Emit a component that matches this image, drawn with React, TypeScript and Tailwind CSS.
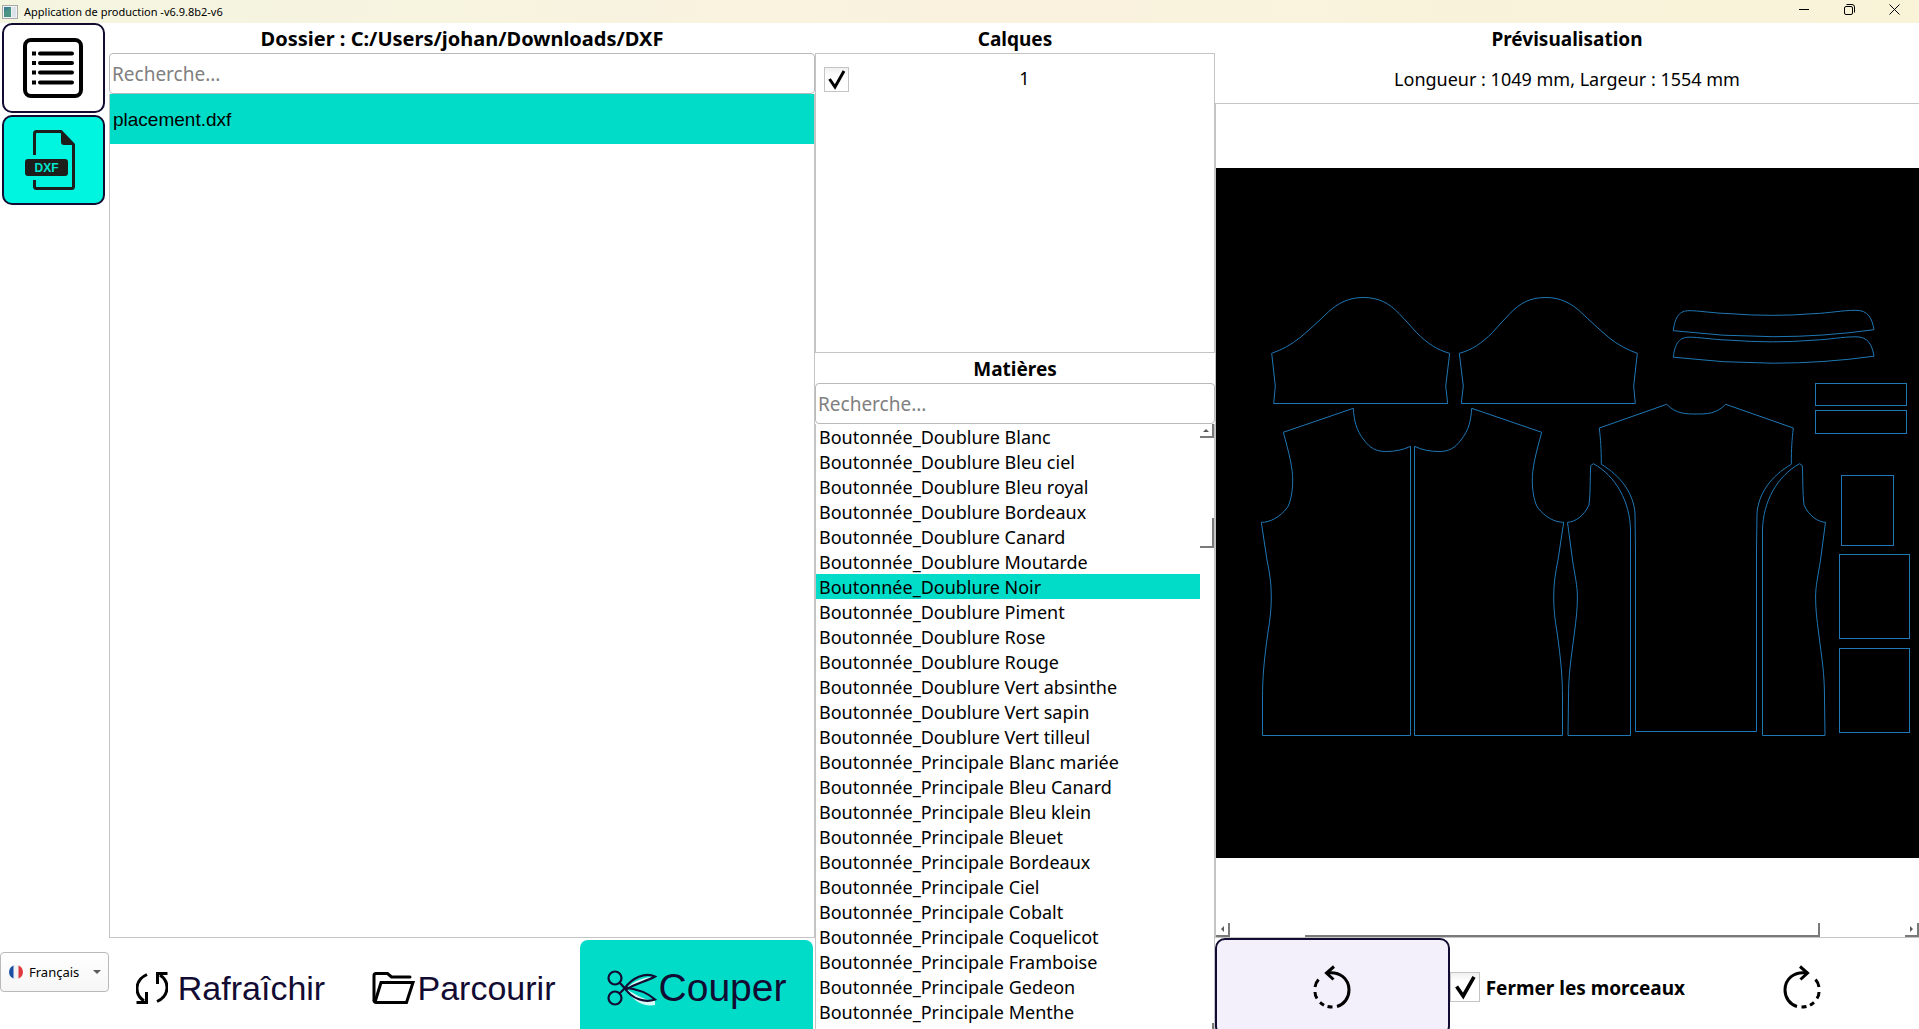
import { useState, ReactNode } from "react";

type IconButtonProps = {
  title: string;
  active?: boolean;
  onClick?: () => void;
  children: ReactNode;
};

type CheckBoxProps = {
  id: string;
  checked: boolean;
  className: string;
  onChange: (checked: boolean) => void;
};

type SearchProps = {
  label: string;
  value: string;
  onChange: (value: string) => void;
};

const MATERIALS = [
  "Boutonnée_Doublure Blanc",
  "Boutonnée_Doublure Bleu ciel",
  "Boutonnée_Doublure Bleu royal",
  "Boutonnée_Doublure Bordeaux",
  "Boutonnée_Doublure Canard",
  "Boutonnée_Doublure Moutarde",
  "Boutonnée_Doublure Noir",
  "Boutonnée_Doublure Piment",
  "Boutonnée_Doublure Rose",
  "Boutonnée_Doublure Rouge",
  "Boutonnée_Doublure Vert absinthe",
  "Boutonnée_Doublure Vert sapin",
  "Boutonnée_Doublure Vert tilleul",
  "Boutonnée_Principale Blanc mariée",
  "Boutonnée_Principale Bleu Canard",
  "Boutonnée_Principale Bleu klein",
  "Boutonnée_Principale Bleuet",
  "Boutonnée_Principale Bordeaux",
  "Boutonnée_Principale Ciel",
  "Boutonnée_Principale Cobalt",
  "Boutonnée_Principale Coquelicot",
  "Boutonnée_Principale Framboise",
  "Boutonnée_Principale Gedeon",
  "Boutonnée_Principale Menthe",
];

const FILES = ["placement.dxf"];

const SLEEVE =
  "M55.7 185.3Q71 180 84 169.7C93 162 103 153 112.3 144C122 135 133 129.5 147 129.5C163 129.5 173 135 183 145.5C189 152 195 158 200.7 164.7C211 175 221 182 233.7 185.3L229.7 218L231.7 235.5H57.7L59.3 218Z";
const FRONT =
  "M137.3 240.3L67.3 264.3C73 285 77 300 76.7 314C76.5 325 74 336 71 340C64 349 54 354.5 45.3 354.3L51 392C53.5 404 55.3 415 55.3 429C55.3 442 54 452 52 464C48 492 46.5 510 46.5 530V567.5H194.5V278.3C187 282 179 283.5 169.7 283.5C160 283.5 154 280 148 272C140 262 138 252 137.3 240.3Z";
const BACK =
  "M450.7 236.3C460 246 470 246 480.3 246C491 246 500 246 509.7 236.3L577.3 260C576 272 575.3 280 575.3 296.3C555 308 542 326 541 346L540.5 382V563.5H419.5V382L419 346C418 326 405 308 385.3 296.3C385.3 280 384.6 272 383.3 260Z";
const SIDE =
  "M377.3 295.7L374.7 297.7C374 310 374.5 325 373 337C368 348 359 354 351.5 354.3L356.5 392C359 408 361.4 418 361.4 429C361.4 442 360 452 358.5 464C355 492 352.5 505 352.5 530L352 567.5H414.5V362C414 334 400 308 377.3 295.7Z";
const COLLAR =
  "M457.3 162.7C459 148 464 142.7 473 142.7C482 142.5 495 145 514 145.7Q557 149 597 145.7C615 145 625 142.3 640 142.3C652 142.3 656 150 658 161.7Q608 168.7 557.3 168.7Q507 168.7 457.3 162.7Z";

const AppSVG = () => (
  <svg width="16" height="14" viewBox="0 0 16 14">
    <rect x="0.5" y="0.5" width="15" height="13" fill="#f2f2f2" stroke="#a9a9a9" />
    <rect x="2" y="2" width="7" height="10" fill="#3f7f93" />
    <path d="M2 7L9 2V12H2Z" fill="#4f9d7d" opacity="0.7" />
    <rect x="10" y="2" width="4" height="10" fill="#dbe3ea" />
  </svg>
);

const ListSVG = () => (
  <svg width="60" height="60" viewBox="0 0 60 60" fill="none" stroke="#000" strokeWidth="4">
    <rect x="2" y="2" width="56" height="56" rx="6" />
    <path strokeLinecap="round" d="M17 15.5H49M17 25H49M17 34.5H49M17 44.5H49" />
    <path d="M9 15.5H13M9 25H13M9 34.5H13M9 44.5H13" />
  </svg>
);

const DxfSVG = () => (
  <svg width="60" height="60" viewBox="0 0 60 60" fill="none" stroke="#1d1d1b" strokeWidth="3">
    <path d="M11.500 25V3.500Q11.500 1.500 13.500 1.500H38L50.500 14.500V56.500Q50.500 58.500 48.500 58.500H13.500Q11.500 58.500 11.500 56.500V50" />
    <path d="M38 1L51.500 15H41Q38 15 38 12Z" fill="#1d1d1b" stroke="none" />
    <rect x="2" y="29" width="43" height="17" rx="3" fill="#1d1d1b" stroke="none" />
    <text
      x="23.500"
      y="42"
      textAnchor="middle"
      fontFamily="Liberation Sans, Arial, sans-serif"
      fontSize="12"
      fontWeight="700"
      fill="#00e6cf"
      stroke="none"
    >
      DXF
    </text>
  </svg>
);

const RefreshSVG = () => (
  <svg width="32" height="32" viewBox="0 0 32 32" fill="none" stroke="#000" strokeWidth="3">
    <path d="M11 2.500C-1.500 8 -2 22 8 29" />
    <path d="M10.500 20V30.500H0.500" />
    <path d="M21 29.500C33.500 24 34 10 24 3" />
    <path d="M21.500 12V1.500H31.500" />
  </svg>
);

const FolderSVG = () => (
  <svg width="44" height="32" viewBox="0 0 44 32" fill="none" stroke="#000" strokeWidth="3">
    <path strokeLinecap="round" d="M2 28V3.500Q2 1.500 4 1.500H15.500L19.500 5H38" />
    <path d="M2 28Q2 30.500 4.500 30.500H34.500L41 10.500H9L3 30" />
  </svg>
);

const ScissorsSVG = () => (
  <svg width="50" height="36" viewBox="0 0 50 36" fill="none" stroke="#120b32" strokeWidth="2.200">
    <path d="M19 19C27 10 38 7 48 7C40 12 28 14 19 19Z" fill="#d8faf6" stroke="none" />
    <path d="M19 19C26 32 38 37 48 35V31C36 30 28 24 19 19Z" fill="#d8faf6" stroke="none" />
    <circle cx="8" cy="8" r="6.500" />
    <circle cx="8" cy="28" r="6.500" />
    <path d="M12.500 12.500L19 19.500C28 14 40 11 48 6.500C38 2 25 8 18 18L12.500 23.500" />
    <path d="M18 17.500C30 19 41 23 48 29.500C38 33 25 29 18 18.500" />
  </svg>
);

const RotateSVG = ({ className }: { className?: string }) => (
  <svg
    className={className}
    width="44"
    height="44"
    viewBox="0 0 44 44"
    fill="none"
    stroke="#000"
    strokeWidth="3"
  >
    <path d="M24 1.500L16.500 8L23.500 14.500" />
    <path d="M17 8C30 6 39 14 39 25C39 33 34 39.500 27 41.500" />
    <path d="M22.500 42Q20 42 17.500 41.500" />
    <path d="M14 40.200Q12 39 10 37.300" />
    <path d="M7 33.500Q5 30.500 5 27" />
    <path d="M5 22Q5.500 18 8.500 14.500" />
  </svg>
);

const IconButton = ({ title, active, onClick, children }: IconButtonProps) => (
  <button
    title={title}
    onClick={onClick}
    className={`flex h-[90px] items-center justify-center rounded-[10px] border-2 border-[#120b32] pr-0.5 ${
      active ? "bg-[#00f5e0]" : "bg-white"
    }`}
  >
    {children}
  </button>
);

const CheckBox = ({ id, checked, className, onChange }: CheckBoxProps) => (
  <span className={`grid shrink-0 ${className}`}>
    <input
      id={id}
      type="checkbox"
      checked={checked}
      onChange={(e) => onChange(e.target.checked)}
      className="peer appearance-none border border-[#c4c4c4] bg-linear-to-b from-[#f0f0f0] to-white to-30% [grid-area:1/1]"
    />
    <svg
      viewBox="0 0 25 25"
      fill="none"
      stroke="#000"
      strokeWidth="3"
      className="pointer-events-none invisible peer-checked:visible [grid-area:1/1]"
    >
      <path d="M5.500 12L11 20L20 4" />
    </svg>
  </span>
);

const Search = ({ label, value, onChange }: SearchProps) => (
  <input
    type="text"
    aria-label={label}
    placeholder="Recherche..."
    value={value}
    onChange={(e) => onChange(e.target.value)}
    className="h-[41px] w-full shrink-0 rounded-sm border border-[#b9b9b9] bg-white px-0.5 text-[19px] outline-none placeholder:text-[#808080]"
  />
);

const Heading = ({ children }: { children: ReactNode }) => (
  <h2 className="flex h-[30px] shrink-0 items-center justify-center pt-0.5 text-[19px] font-bold">
    {children}
  </h2>
);

// bevelled pieces of the classic scroll bars
const BEVEL = "flex items-center justify-center border-r-2 border-b-2 border-[#7a7a7a]";

const PatternPreview = () => (
  <svg
    viewBox="0 0 703 690"
    className="w-full bg-black"
    fill="none"
    stroke="#1f77b4"
    strokeWidth="1"
  >
    <path d={SLEEVE} />
    <path d={SLEEVE} transform="translate(477 0) scale(-1 1)" />
    <path d={FRONT} />
    <path d={FRONT} transform="translate(393 0) scale(-1 1)" />
    <path d={BACK} />
    <path d={SIDE} />
    <path d={SIDE} transform="translate(961 0) scale(-1 1)" />
    <path d={COLLAR} />
    <path d={COLLAR} transform="translate(0 26.500)" />
    <rect x="599.5" y="215.5" width="91" height="22" />
    <rect x="599.5" y="242.5" width="91" height="23" />
    <rect x="625.5" y="307.5" width="52" height="70" />
    <rect x="623.5" y="386.5" width="70" height="84" />
    <rect x="623.5" y="480.5" width="70" height="84" />
  </svg>
);

const App = () => {
  const [tab, setTab] = useState("dxf");
  const [fileSearch, setFileSearch] = useState("");
  const [materialSearch, setMaterialSearch] = useState("");
  const [material, setMaterial] = useState("Boutonnée_Doublure Noir");
  const [layerOn, setLayerOn] = useState(true);
  const [closePieces, setClosePieces] = useState(true);

  const files = FILES.filter((f) => f.includes(fileSearch));
  const materials = MATERIALS.filter((m) =>
    m.toLowerCase().includes(materialSearch.toLowerCase()),
  );

  return (
    <div className="flex h-screen flex-col overflow-hidden bg-white font-['Noto_Sans',sans-serif] text-black">
      <header className="flex h-[23px] shrink-0 items-center bg-linear-to-r from-[#f4f5e0] via-[#faf2df] to-[#f9f3d8] pl-0.5">
        <AppSVG />
        <h1 className="ml-1.5 pt-0.5 text-[11px]">Application de production -v6.9.8b2-v6</h1>
        <div className="ml-auto flex h-full items-center gap-[34px] pr-[19px] pb-1">
          <button title="Réduire">
            <svg width="11" height="11" viewBox="0 0 11 11" stroke="#000">
              <path d="M0 5.500H10" />
            </svg>
          </button>
          <button title="Restaurer">
            <svg width="11" height="11" viewBox="0 0 11 11" fill="none" stroke="#000">
              <rect x="0.5" y="2.500" width="8" height="8" rx="1.500" />
              <path d="M2.500 0.500H8Q10.500 0.500 10.500 3V8.500" />
            </svg>
          </button>
          <button title="Fermer">
            <svg width="11" height="11" viewBox="0 0 11 11" stroke="#000">
              <path d="M0.500 0.500L10.500 10.500M10.500 0.500L0.500 10.500" />
            </svg>
          </button>
        </div>
      </header>

      <div className="grid min-h-0 flex-1 grid-cols-[109px_706fr_400fr_704fr]">
        <nav className="flex flex-col pb-[37px]">
          <div className="flex flex-col gap-0.5 pr-1 pl-0.5">
            <IconButton title="Liste" active={tab === "list"} onClick={() => setTab("list")}>
              <ListSVG />
            </IconButton>
            <IconButton title="DXF" active={tab === "dxf"} onClick={() => setTab("dxf")}>
              <DxfSVG />
            </IconButton>
          </div>
          <div className="relative mt-auto">
            <select
              aria-label="Langue"
              className="h-10 w-full appearance-none rounded-sm border border-[#b9b9b9] bg-linear-to-b from-white to-[#f6f6f6] pt-0.5 pl-7 text-[13px]"
            >
              <option>Français</option>
              <option>English</option>
            </select>
            <svg
              className="pointer-events-none absolute top-[13px] left-[9px]"
              width="14"
              height="14"
              viewBox="0 0 14 14"
            >
              <clipPath id="flag">
                <circle cx="7" cy="7" r="7" />
              </clipPath>
              <g clipPath="url(#flag)">
                <rect width="14" height="14" fill="#f3f3f3" />
                <rect width="4.500" height="14" fill="#1b4fa3" />
                <rect x="9.500" width="4.500" height="14" fill="#e0383c" />
              </g>
            </svg>
            <svg
              className="pointer-events-none absolute top-[18px] right-2"
              width="8"
              height="4"
              viewBox="0 0 8 4"
            >
              <path d="M0 0H8L4 4Z" fill="#5a5a5a" />
            </svg>
          </div>
        </nav>

        <section className="flex min-h-0 flex-col">
          <Heading>
            <span className="text-[20px]">Dossier : C:/Users/johan/Downloads/DXF</span>
          </Heading>
          <Search label="Rechercher un fichier" value={fileSearch} onChange={setFileSearch} />
          <ul className="min-h-0 flex-1 border-x border-b border-[#c4c4c4]">
            {files.map((file) => (
              <li key={file}>
                <button className="h-[50px] w-full bg-[#00dcc8] px-[3px] pt-0.5 text-left font-['Liberation_Sans',Arial,sans-serif] text-[19px]">
                  {file}
                </button>
              </li>
            ))}
          </ul>
          <div className="grid h-[91px] shrink-0 grid-cols-3 overflow-hidden pt-0.5 pr-0.5 pl-[5px] font-['Liberation_Sans',Arial,sans-serif] text-[34px] text-[#120b32]">
            <button className="flex h-24 items-center justify-center gap-2.5">
              <RefreshSVG />
              Rafraîchir
            </button>
            <button className="flex h-24 items-center justify-center gap-0.5">
              <FolderSVG />
              Parcourir
            </button>
            <button className="flex h-24 items-center justify-center gap-0.5 rounded-lg bg-[#00dcc8] text-[39px]">
              <ScissorsSVG />
              Couper
            </button>
          </div>
        </section>

        <section className="flex min-h-0 flex-col">
          <Heading>Calques</Heading>
          <div className="h-[300px] shrink-0 border border-[#c4c4c4] pt-[13px] pr-3.5 pl-2">
            <div className="flex items-start">
              <CheckBox
                id="layer-1"
                className="size-[25px]"
                checked={layerOn}
                onChange={setLayerOn}
              />
              <label htmlFor="layer-1" className="flex-1 text-center text-[18px] leading-[22px]">
                1
              </label>
            </div>
          </div>
          <Heading>Matières</Heading>
          <Search
            label="Rechercher une matière"
            value={materialSearch}
            onChange={setMaterialSearch}
          />
          <div className="flex min-h-0 flex-1 overflow-hidden border-x border-[#c4c4c4]">
            <ul className="min-w-0 flex-1 overflow-hidden">
              {materials.map((name) => (
                <li key={name}>
                  <button
                    onClick={() => setMaterial(name)}
                    className={`block h-[25px] w-full px-[3px] text-left text-[18px] leading-[27px] ${
                      name === material ? "bg-[#00dcc8]" : ""
                    }`}
                  >
                    {name}
                  </button>
                </li>
              ))}
            </ul>
            <div className="flex w-3.5 flex-col">
              <span className={`h-3.5 ${BEVEL}`}>
                <svg width="6" height="3" viewBox="0 0 6 3">
                  <path d="M0 3L3 0L6 3Z" fill="#5a5a5a" />
                </svg>
              </span>
              <span className={`mt-20 h-[30px] ${BEVEL}`} />
              <span className="mt-auto h-1.5 border-r-2 border-[#7a7a7a]" />
            </div>
          </div>
        </section>

        <section className="flex min-h-0 flex-col">
          <Heading>Prévisualisation</Heading>
          <p className="flex h-[50px] shrink-0 items-center justify-center pt-0.5 text-[18px]">
            Longueur : 1049 mm, Largeur : 1554 mm
          </p>
          <div className="flex min-h-0 flex-1 flex-col border-y border-l border-[#c4c4c4]">
            <div className="flex min-h-0 flex-1 items-center overflow-hidden pb-0.5">
              <PatternPreview />
            </div>
            <div className="flex h-3.5 shrink-0">
              <span className={`w-3.5 ${BEVEL}`}>
                <svg width="3" height="6" viewBox="0 0 3 6">
                  <path d="M3 0L0 3L3 6Z" fill="#5a5a5a" />
                </svg>
              </span>
              <span className="flex-75" />
              <span className={`flex-515 ${BEVEL}`} />
              <span className="flex-85" />
              <span className={`w-3.5 ${BEVEL}`}>
                <svg width="3" height="6" viewBox="0 0 3 6">
                  <path d="M0 0L3 3L0 6Z" fill="#5a5a5a" />
                </svg>
              </span>
            </div>
          </div>
          <div className="grid h-[91px] shrink-0 grid-cols-3 overflow-hidden">
            <button
              title="Rotation à gauche"
              className="flex h-[98px] items-center justify-center rounded-[10px] border-2 border-[#120b32] bg-[#f3f0fb]"
            >
              <RotateSVG />
            </button>
            <div className="flex h-[98px] items-center gap-1.5">
              <CheckBox
                id="close-pieces"
                className="size-[30px]"
                checked={closePieces}
                onChange={setClosePieces}
              />
              <label
                htmlFor="close-pieces"
                className="pt-0.5 text-[19px] font-bold whitespace-nowrap"
              >
                Fermer les morceaux
              </label>
            </div>
            <button title="Rotation à droite" className="flex h-[98px] items-center justify-center">
              <RotateSVG className="-scale-x-100" />
            </button>
          </div>
        </section>
      </div>
    </div>
  );
};

export default App;
